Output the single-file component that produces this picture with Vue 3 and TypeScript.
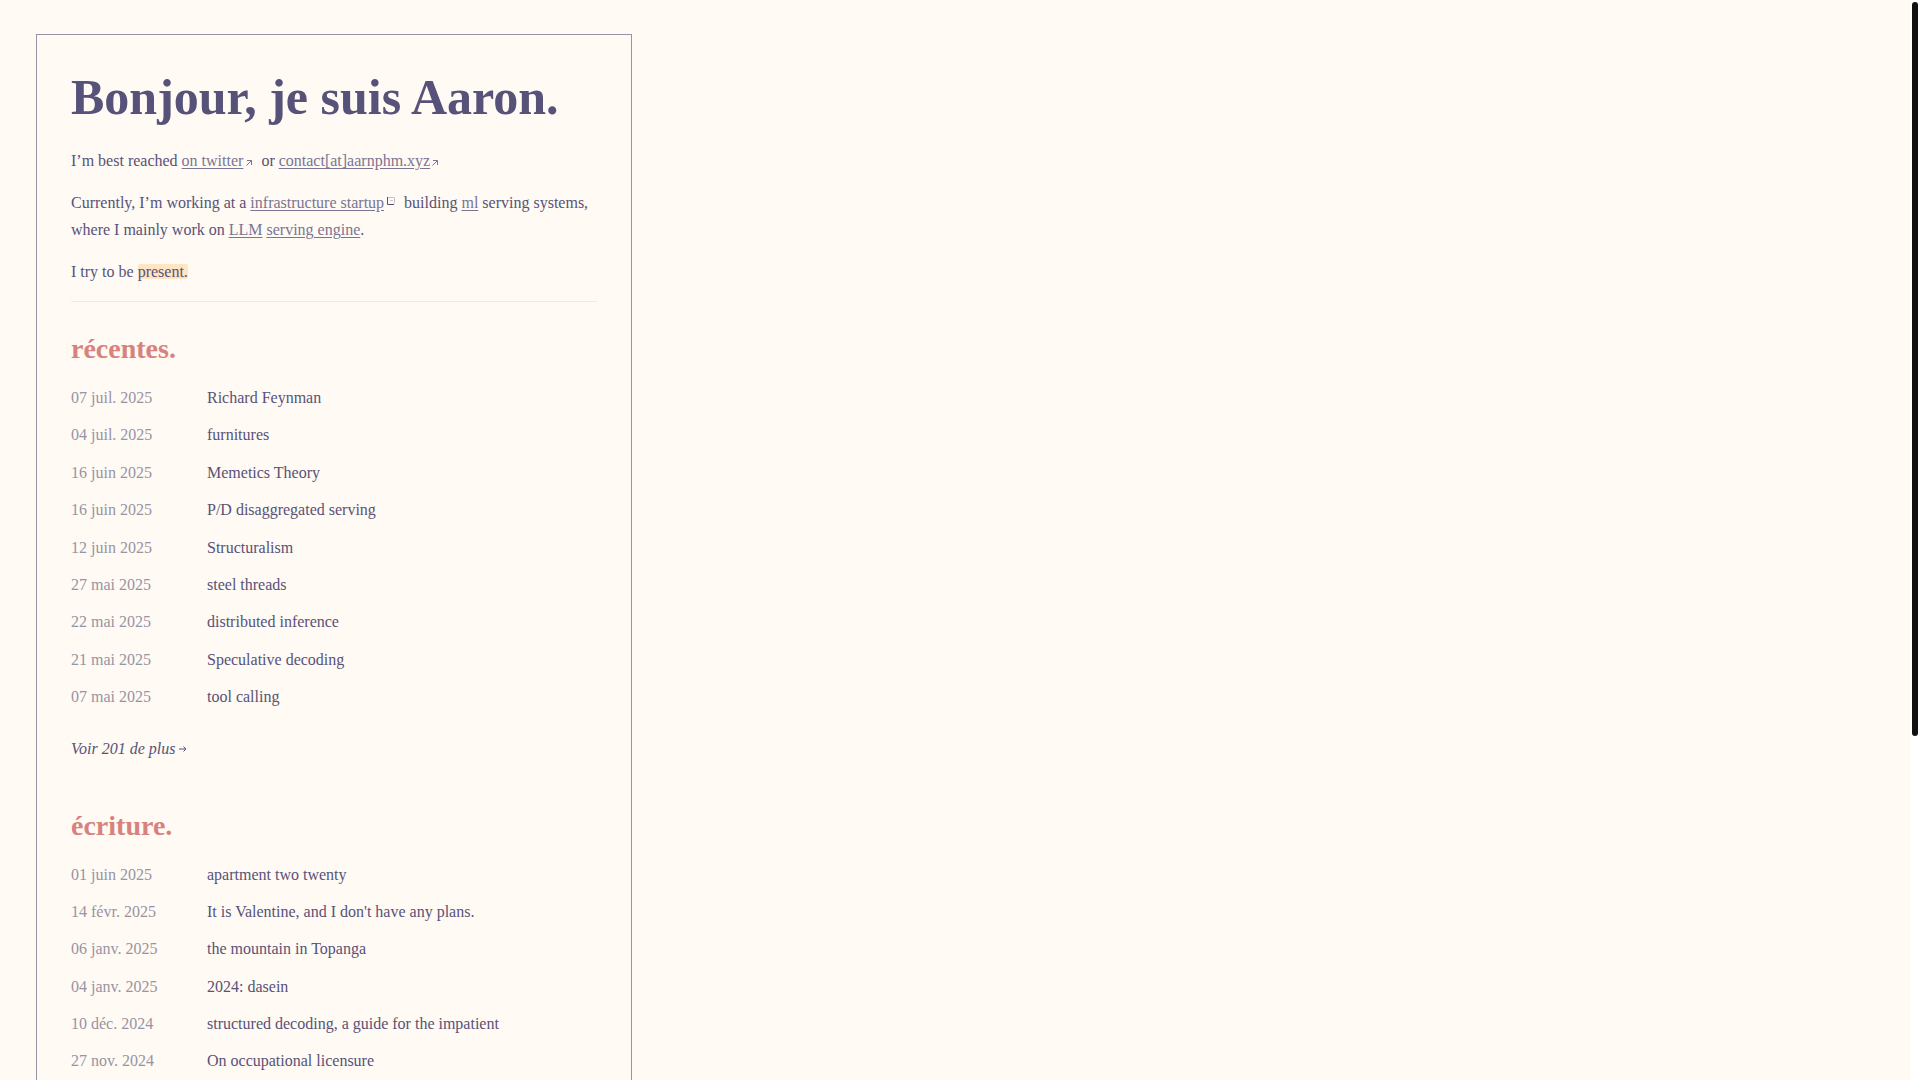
<script setup lang="ts">
interface Note {
  date: string
  title: string
}

interface Section {
  id: string
  heading: string
  notes: Note[]
  more?: string
}

const sections: Section[] = [
  {
    id: 'recentes',
    heading: 'récentes.',
    more: 'Voir 201 de plus',
    notes: [
      { date: '07 juil. 2025', title: 'Richard Feynman' },
      { date: '04 juil. 2025', title: 'furnitures' },
      { date: '16 juin 2025', title: 'Memetics Theory' },
      { date: '16 juin 2025', title: 'P/D disaggregated serving' },
      { date: '12 juin 2025', title: 'Structuralism' },
      { date: '27 mai 2025', title: 'steel threads' },
      { date: '22 mai 2025', title: 'distributed inference' },
      { date: '21 mai 2025', title: 'Speculative decoding' },
      { date: '07 mai 2025', title: 'tool calling' },
    ],
  },
  {
    id: 'ecriture',
    heading: 'écriture.',
    notes: [
      { date: '01 juin 2025', title: 'apartment two twenty' },
      { date: '14 févr. 2025', title: "It is Valentine, and I don't have any plans." },
      { date: '06 janv. 2025', title: 'the mountain in Topanga' },
      { date: '04 janv. 2025', title: '2024: dasein' },
      { date: '10 déc. 2024', title: 'structured decoding, a guide for the impatient' },
      { date: '27 nov. 2024', title: 'On occupational licensure' },
    ],
  },
]
</script>

<template>
  <div class="page">
    <main class="card">
      <h1>Bonjour, je suis Aaron.</h1>
      <p>
        I’m best reached <a href="#twitter">on twitter</a>
        <svg class="out spaced" viewBox="0 0 6 6" aria-hidden="true"><path d="M1 .5h4.5V5M5.5 .5 .5 5.5" /></svg>
        or <a href="#contact">contact[at]aarnphm.xyz</a><svg class="out" viewBox="0 0 6 6" aria-hidden="true"><path d="M1 .5h4.5V5M5.5 .5 .5 5.5" /></svg>
      </p>
      <p>
        Currently, I’m working at a <a href="#startup">infrastructure startup</a>
        <svg class="mark" viewBox="0 0 8 8" aria-hidden="true">
          <path class="faint" d="M1 .5h6.5v6M3 3.5h3" />
          <path d="M.5 0v7.5H7" />
        </svg>
        building <a href="#ml">ml</a> serving systems, where I mainly work on
        <a href="#llm">LLM</a> <a href="#engine">serving engine</a>.
      </p>
      <p>I try to be <mark>present.</mark></p>
      <hr />
      <section v-for="section in sections" :key="section.id" :aria-labelledby="section.id">
        <h2 :id="section.id">{{ section.heading }}</h2>
        <ul>
          <li v-for="note in section.notes" :key="note.title">
            <time>{{ note.date }}</time>
            <a href="#note">{{ note.title }}</a>
          </li>
        </ul>
        <a v-if="section.more" class="more" href="#more">
          {{ section.more }}
          <svg viewBox="0 0 8 6" aria-hidden="true"><path d="M0 3h7M4.5 .5 7 3 4.5 5.5" /></svg>
        </a>
      </section>
    </main>
    <div class="track" aria-hidden="true"><div class="thumb"></div></div>
  </div>
</template>

<style>
body {
  background: #fffaf3;
}
</style>

<style scoped>
.page {
  box-sizing: border-box;
  height: 100vh;
  overflow: hidden;
  padding: 34px 46px 0 36px;
  color: #575279;
  font: 16px/27px "Liberation Serif", serif;
}

.card {
  box-sizing: border-box;
  max-width: 596px;
  min-height: 100vh;
  padding: 34px;
  border: 1px solid #9893a5;
}

h1 {
  margin: 0 0 22px;
  font-size: 50px;
  line-height: 56px;
  font-weight: 700;
}

p {
  margin: 0 0 15px;
}

p a {
  color: #797593;
  text-decoration: underline;
  text-underline-offset: 2px;
}

svg {
  fill: none;
  stroke: #575279;
  stroke-width: 1;
}

.out {
  width: 6px;
  height: 6px;
  margin-left: 2px;
  stroke: #797593;
}

.out.spaced {
  margin: 0 5px 0 3px;
}

.mark {
  width: 8px;
  height: 8px;
  margin: 0 5px 0 3px;
  vertical-align: 3px;
}

.mark .faint {
  stroke: #c8c2cb;
}

mark {
  display: inline-block;
  line-height: 15px;
  border-radius: 2px;
  background: #fee6c5;
  color: inherit;
}

hr {
  height: 1px;
  margin: 16px 0 0;
  border: 0;
  background: #f0eae6;
}

section {
  padding-top: 29px;
}

section + section {
  padding-top: 46px;
}

h2 {
  margin: 0;
  color: #d7827e;
  font-size: 28px;
  line-height: 36px;
}

ul {
  margin: 0;
  padding: 20px 0 0;
  list-style: none;
}

li {
  display: grid;
  grid-template-columns: 120px 1fr;
  column-gap: 16px;
  padding-bottom: 15px;
  line-height: 1.4;
}

time {
  color: #9893a5;
}

li a,
.more {
  color: inherit;
  text-decoration: none;
}

.more {
  display: block;
  margin-top: 11px;
  font-style: italic;
}

.more svg {
  width: 8px;
  height: 6px;
  vertical-align: 2px;
}

.track {
  position: fixed;
  inset: 0 0 0 auto;
  width: 10px;
  background: #fff;
}

.thumb {
  width: 6px;
  height: 68vh;
  margin: 2px;
  border-radius: 3px;
  background: #111;
}
</style>
